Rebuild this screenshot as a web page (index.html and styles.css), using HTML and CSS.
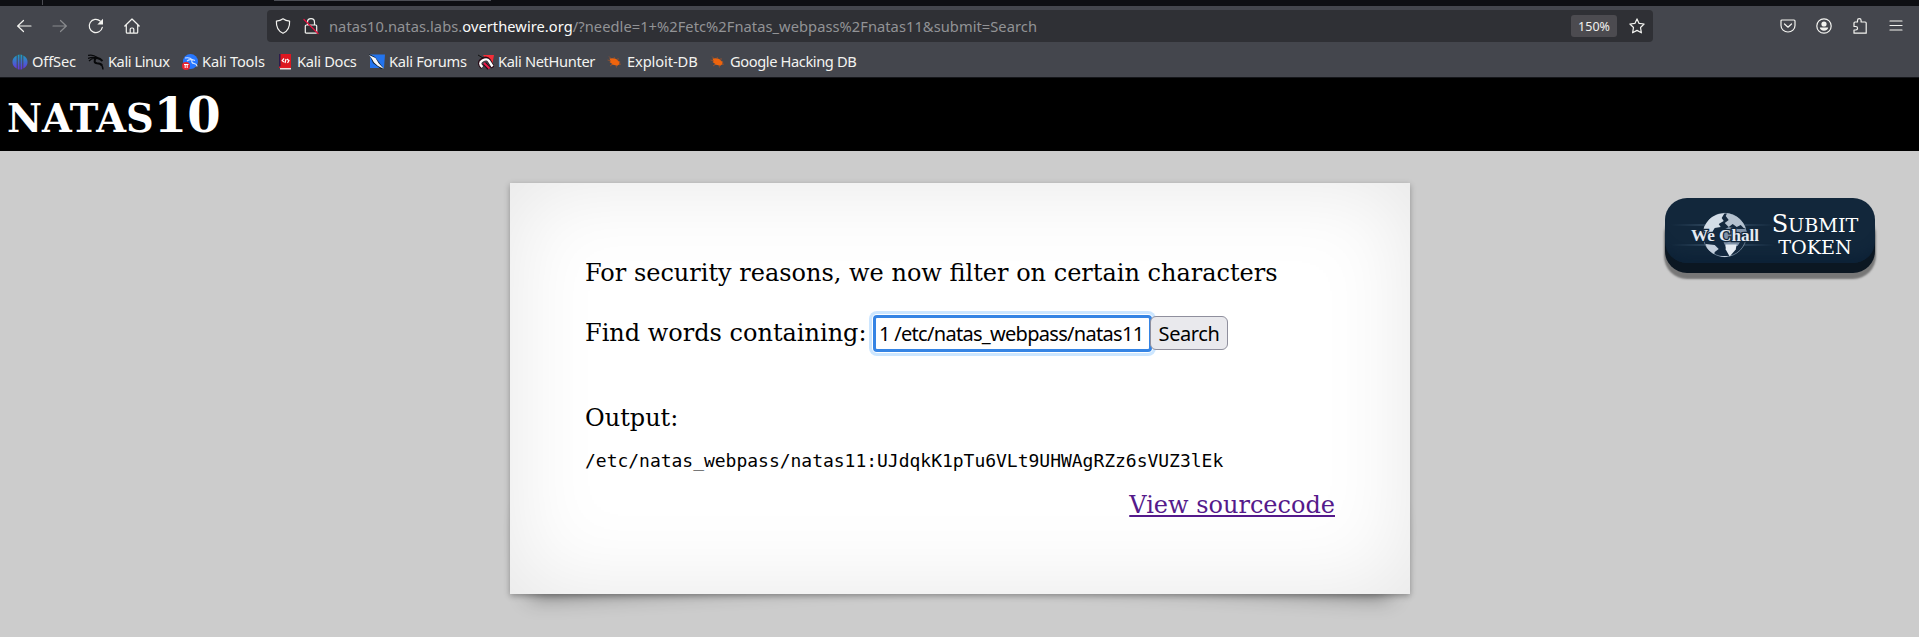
FILE: index.html
```html
<!DOCTYPE html>
<html lang="en">
<head>
<meta charset="utf-8">
<title>natas10</title>
<link rel="stylesheet" href="styles.css">
</head>
<body>
<div class="tabstrip"><span class="tab-sep"></span><span class="tab-active"></span></div>
<nav class="toolbar">
  <div class="nav-buttons">
    <svg class="ic" viewBox="0 0 16 16"><path d="M15 8H1.500M7.500 2.500 1.700 8l5.800 5.500"/></svg>
    <svg class="ic dim" viewBox="0 0 16 16"><path d="M1 8h13.500M8.500 2.500 14.300 8l-5.800 5.500"/></svg>
    <svg class="ic" viewBox="0 0 16 16"><path d="M14.300 9.300A6.600 6.600 0 1 1 12.200 3"/><path class="solid" d="M15 .8v5.700H9.300z"/></svg>
    <svg class="ic" viewBox="0 0 16 16"><path d="M.8 8 8 1l7.200 7M2.300 6.800v7.400q0 1 1 1h9.400q1 0 1-1V6.800M6.200 15v-3.700q0-1.300 1.300-1.300h1q1.300 0 1.300 1.300V15"/></svg>
  </div>
  <div class="urlbar">
    <svg class="ic shield" viewBox="0 0 16 16"><path d="M8 .8c2 1.500 4 2.100 6.600 2.300.3 5.700-1.600 10-6.600 12.200C3 13.100 1.100 8.800 1.400 3.100 4 2.900 6 2.300 8 .8z"/></svg>
    <svg class="ic" viewBox="0 0 16 16"><path d="M4.500 7V4.200a3.500 3.500 0 0 1 7 0V7M3.300 7h9.400q1 0 1 1v6.200q0 1-1 1H3.300q-1 0-1-1V8q0-1 1-1z"/><path class="strike" d="M1 1.500 15 15.500"/></svg>
    <span class="url">natas10.natas.labs.<b>overthewire.org</b>/?needle=1+%2Fetc%2Fnatas_webpass%2Fnatas11&amp;submit=Search</span>
    <span class="zoom">150%</span>
    <svg class="ic star" viewBox="0 0 16 16"><path d="m8 .9 2.100 4.500 5 .6-3.600 3.500.9 5.300L8 12.400l-4.400 2.400.9-5.300L.9 6l5-.6z"/></svg>
  </div>
  <div class="menu-buttons">
    <svg class="ic" viewBox="0 0 16 16"><path d="M2 2h12q1 0 1 1v4.500a7 6.500 0 0 1-14 0V3q0-1 1-1zM4.500 6 8 9.200 11.500 6"/></svg>
    <svg class="ic" viewBox="0 0 16 16"><circle cx="8" cy="8" r="7.200"/><circle class="solid" cx="8" cy="6" r="2.600"/><path class="solid" d="M3.800 9.600h8.400c0 2-2 3.200-4.200 3.200s-4.200-1.200-4.200-3.200z"/></svg>
    <svg class="ic" viewBox="0 0 16 16"><path d="M5.500 4V2.500a1.800 1.800 0 0 1 3.600 0V4h4.100q1 0 1 1v10.200H2V12h1.800a1.700 1.700 0 0 0 0-3.500H2V5q0-1 1-1z"/></svg>
    <svg class="ic" viewBox="0 0 16 16"><path d="M2 3h12M2 7.500h12M2 12h12"/></svg>
  </div>
</nav>
<div class="bookmarks">
  <a class="bm w1"><svg viewBox="0 0 16 16"><defs><linearGradient id="g" gradientUnits="userSpaceOnUse" x1="0" y1="0" x2="0" y2="16"><stop stop-color="#17a5bd"/><stop offset="1" stop-color="#6b2fe0"/></linearGradient></defs><path fill="url(#g)" d="M4.700 1.500v13C-1 12-1 4 4.700 1.500zM5.700 1q1-.5 1.800-.5v15q-.8 0-1.800-.5zM8.500.5q.8 0 1.800.5v14q-1 .5-1.800.5zM11.300 1.500c5.700 2.500 5.700 10.500 0 13z"/></svg><span>OffSec</span></a>
  <a class="bm w2"><svg viewBox="0 0 16 16"><g fill="none" stroke="#08090b" stroke-width="1.300"><path d="M0 1.500Q5 0 9 3.500M0 4.500q5-2 8-.5M1 7q3-3 6-2.500"/><path stroke-width="2" d="M8 3.500l4 1.500 2.500 2M8 4c-2 2-2 5 1 5.200 3 0 4 .3 5 2.300"/><path d="M12 9.500q3 2 3 6"/></g></svg><span>Kali Linux</span></a>
  <a class="bm w3"><svg viewBox="0 0 16 16"><circle cx="8.500" cy="7.500" r="7.500" fill="#2777ff"/><path d="M3 4q5-1 7 1.500l3 1M5 7q3-2 5-1-1 3 2 3.500t3 3" fill="none" stroke="#d6e6ff" stroke-width="1.100"/><circle cx="4" cy="12" r="4" fill="#e8232f"/><path d="M2 10.500h4.500M3.200 10.500v3.500M5.200 10.500v3.500" stroke="#fff" fill="none"/></svg><span>Kali Tools</span></a>
  <a class="bm w4"><svg viewBox="0 0 16 16"><path fill="#dc1720" d="M3 0h11v13H3z"/><path fill="#2b1d4d" d="M2 0h1.500v13H2z"/><path fill="#f3dede" d="M3 14h11v1.500H3z"/><path fill="#e21b25" d="M2 12.500h12v1.500H2z"/><path d="M7 4.500 5.200 6.700 7 8M9 5 8 9M10 5l2 1.700L10.500 9" fill="none" stroke="#fff" stroke-width="1.200"/></svg><span>Kali Docs</span></a>
  <a class="bm w5"><svg viewBox="0 0 16 16"><path fill="#2374ee" d="M1 .5h15L15 14H1z"/><path fill="#0c1c2c" d="m0 0 6 3 9 12-3 0L4 9z"/><path fill="#f3f6fa" d="m0 1 6.500 3 3 5 5.500 6-6-3-4-3.500L3 5z"/></svg><span>Kali Forums</span></a>
  <a class="bm w6"><svg viewBox="0 0 16 16"><path fill="#f52e38" d="M5 1h11l-2 11z"/><path d="M4.500 13.500Q-.5 9 4 6t7 .5l4 7M6.500 9.500l4.500 5" fill="none" stroke="#280b17" stroke-width="4"/><path d="M4.500 13Q0 9 4.500 6.500t6.500.5l3.500 5.500" fill="none" stroke="#fff" stroke-width="2.400"/><path d="m6 9 5.500 5.500" stroke="#f31b4c" stroke-width="1.800"/><path d="m0 1 5 3" stroke="#111"/></svg><span>Kali NetHunter</span></a>
  <a class="bm w7"><svg viewBox="0 0 16 16"><path id="bug" fill="#ef640d" d="M2.500 4.500q4-1 7.500 1l1.500 1.800 2 .7-1.500.7.5 2.300-1.500-.2-.7 1.200-1.800-.8-2.500-.5-1.500.3.500-1.300L2.500 8l1-.7z"/><path d="M2 2.500 4.500 5M7 3l1 2M.5 6l3 .8M3 12l3-2M11 4v2.500M12 9l2 1.500M9 11l.5 2.500" stroke="#a95425" stroke-width=".7"/></svg><span>Exploit-DB</span></a>
  <a class="bm w8"><svg viewBox="0 0 16 16"><use href="#bug"/><path d="M2 2.500 4.500 5M7 3l1 2M.5 6l3 .8M3 12l3-2M11 4v2.500M12 9l2 1.500M9 11l.5 2.500" stroke="#a95425" stroke-width=".7"/></svg><span>Google Hacking DB</span></a>
</div>
<h1 class="title"><span class="sc">NATAS</span>10</h1>
<main class="page">
  <section class="card">
    <p class="note">For security reasons, we now filter on certain characters</p>
    <form class="search"><label>Find words containing:</label><input class="needle" value="1 /etc/natas_webpass/natas11"><button class="go" type="button">Search</button></form>
    <p class="out">Output:</p>
    <pre class="result">/etc/natas_webpass/natas11:UJdqkK1pTu6VLt9UHWAgRZz6sVUZ3lEk</pre>
    <div class="source"><a href="#">View sourcecode</a></div>
  </section>
  <a class="token">
    <svg class="logo" viewBox="0 0 104 60">
      <defs>
        <linearGradient id="ray"><stop stop-color="#6d93b5" stop-opacity="0"/><stop offset=".5" stop-color="#8aa9c5"/><stop offset="1" stop-color="#6d93b5" stop-opacity="0"/></linearGradient>
        <linearGradient id="land" x2="1" y2="1"><stop stop-color="#e4ebf2"/><stop offset="1" stop-color="#8496aa"/></linearGradient>
        <clipPath id="disc"><circle cx="55" cy="30" r="22"/></clipPath>
      </defs>
      <path fill="url(#ray)" opacity=".7" d="M0 19.500h104v1H0zM0 39.500h104v1H0z"/>
      <g transform="translate(-1.300 0)">
      <circle cx="55" cy="30" r="21.700" fill="#14293f" stroke="#8b9db0" stroke-width=".7"/>
      <g clip-path="url(#disc)">
        <path fill="#d3dde7" d="M34 22 40 13l8-4 7-1-3 5 2 3-5 3 2 3-6 1-3 5-8 1z"/>
        <path fill="#b4c1cf" d="m58 7 9 1 9 8 2 8-4-1-3-3-4 2-4-3-4 3-4-4 4-3-3-4z"/>
        <path fill="#7f92a8" d="m52 26 7-4 9 2 9 0 1 8-6 2-4 7-12 1-3-7-3-3z"/>
        <path fill="#e4ebf2" d="M56 39.500h11l-1 5-6 7-4-7z"/>
        <path fill="#c3cedb" d="m36 39 9 1 4 4-4 3-1 5-6-5zM49 51l10 0-4 2z"/>
      </g>
      </g>
      <text class="wechall" x="20" y="36" textLength="68" lengthAdjust="spacingAndGlyphs">We Chall</text>
    </svg>
    <span class="label"><span class="l1">S<span class="sc">UBMIT</span></span><span class="sc l2">TOKEN</span></span>
  </a>
</main>
</body>
</html>
```
FILE: styles.css
```css
* { box-sizing: border-box; }
html, body { height: 100%; }
body {
  margin: 0;
  background: #ccc;
  font: 24px/28px "DejaVu Serif", serif;
  color: #000;
  overflow: hidden;
}
.tabstrip { display: flex; height: 6px; background: #0e0f13; }
.tab-sep { width: 1px; height: 5px; margin-left: 42px; background: #4b4c52; }
.tab-active { width: 217px; height: 1px; margin-left: 231px; background: #4c4e55; }

.toolbar {
  display: flex;
  align-items: center;
  height: 40px;
  background: #44464d;
  font: 14.670px/20px "Noto Sans", sans-serif;
}
.ic { display: block; flex: none; width: 16px; height: 16px; overflow: visible; fill: none; stroke: #f3f3f0; stroke-width: 1.200; stroke-linecap: round; stroke-linejoin: round; }
.ic .solid { fill: #f3f3f0; stroke: none; }
.ic .strike { stroke: #e3123f; stroke-width: 1.300; }
.dim { opacity: .4; }
.nav-buttons { display: flex; gap: 20px; width: 267px; padding-left: 16px; }
.urlbar {
  display: flex;
  align-items: center;
  width: 1386px;
  height: 32px;
  padding: 0 8px;
  border-radius: 4px;
  background: #2f3035;
}
.shield { margin-right: 12px; }
.url { flex: 1; padding-left: 10px; color: #929396; letter-spacing: .055px; white-space: nowrap; }
.url b { font-weight: 400; color: #fbfbfa; }
.zoom { width: 46px; height: 22px; margin-right: 12px; border-radius: 3px; background: #4c4b50; color: #f1f1ee; font-size: 12.500px; line-height: 23px; text-align: center; }
.menu-buttons { display: flex; gap: 20px; margin-left: 127px; }

.bookmarks {
  display: flex;
  height: 32px;
  padding-left: 12px;
  border-bottom: 1px solid #15161a;
  background: #44464d;
  color: #f3f3f0;
  font: 14.670px/30px "Noto Sans", sans-serif;
}
.bm { display: flex; align-items: center; gap: 4px; white-space: nowrap; }
.bm svg { flex: none; width: 16px; height: 16px; }
.bm span { height: 31px; }
.w1 { width: 76px; letter-spacing: -.15px; }
.w2 { width: 94px; letter-spacing: -.45px; }
.w3 { width: 95px; letter-spacing: -.15px; }
.w4 { width: 92px; letter-spacing: -.3px; }
.w5 { width: 109px; letter-spacing: -.3px; }
.w6 { width: 129px; letter-spacing: -.35px; }
.w7 { width: 103px; letter-spacing: -.1px; }
.w8 { letter-spacing: -.4px; }

.title { height: 73px; margin: 0; padding: 9px 0 0 7px; background: #000; color: #fff; font-size: 48px; line-height: 56px; }
.sc { font-size: .8em; }

.page { display: grid; grid-template-columns: 510px 900px 1fr; padding-top: 32px; align-items: start; position: relative; z-index: 0; }
.card {
  grid-column: 2;
  position: relative;
  height: 411px;
  padding: 76px 75px 0;
  background: #fff;
  box-shadow: 0 1.500px 6px rgba(0,0,0,.3), 0 0 90px rgba(0,0,0,.1) inset;
}
.card::before, .card::after {
  content: "";
  position: absolute;
  z-index: -1;
  bottom: 22.500px;
  left: 18px;
  width: 50%;
  height: 20%;
  max-width: 450px;
  box-shadow: 0 14px 22px rgba(0,0,0,.45);
  transform: rotate(-3deg);
}
.card::after { right: 18px; left: auto; transform: rotate(3deg); }
.note { margin: 0 0 28px; }
.search { display: flex; align-items: center; height: 37px; margin: 0; }
.search label { width: 288px; padding-bottom: 2px; white-space: nowrap; }
.needle {
  width: 279px;
  height: 37px;
  padding: 0 3px;
  border: 3px solid #3584e4;
  border-radius: 4px;
  outline: none;
  background: #fff;
  box-shadow: 0 0 0 1px #fff, 0 0 0 4px #cce6ff;
  color: #000;
  font: 20px/30px "Noto Sans", sans-serif;
  letter-spacing: -.7px;
}
.go {
  position: relative;
  width: 78px;
  height: 34px;
  margin: -2px 0 0 -2px;
  padding: 0;
  border: 1px solid #8f8f9d;
  border-radius: 6px;
  background: #e9e9ed;
  color: #000;
  font: 20px/33px "Noto Sans", sans-serif;
  letter-spacing: -.4px;
}
.out { margin: 52px 0 0; }
.result { margin: 18px 0 0; font: 18px/21px "DejaVu Sans Mono", monospace; letter-spacing: -.02px; }
.source { margin-top: 20px; text-align: right; }
.source a { color: #551a8b; }

.token {
  display: flex;
  justify-self: end;
  width: 210px;
  height: 65px;
  margin: 15px 44px 0 0;
  border-radius: 22px;
  background: #12273b;
  box-shadow: inset 0 -18px 12px -12px #0c2136, 0 10px 0 #0b1722, 0 15px 2px 1px #777;
  color: #fff;
}
.logo { width: 104px; height: 60px; margin: 7px 0 0 6px; flex: none; }
.wechall { font: bold 16.500px "Liberation Serif", serif; fill: #e6ebf2; stroke: #12273b; stroke-width: 2.500px; paint-order: stroke; }
.label { display: flex; flex-direction: column; align-items: center; width: 88px; margin-left: -4px; padding-top: 15px; font-size: 24px; line-height: 23px; }
.l1 { white-space: nowrap; }
.l2 { line-height: 22px; }
```
